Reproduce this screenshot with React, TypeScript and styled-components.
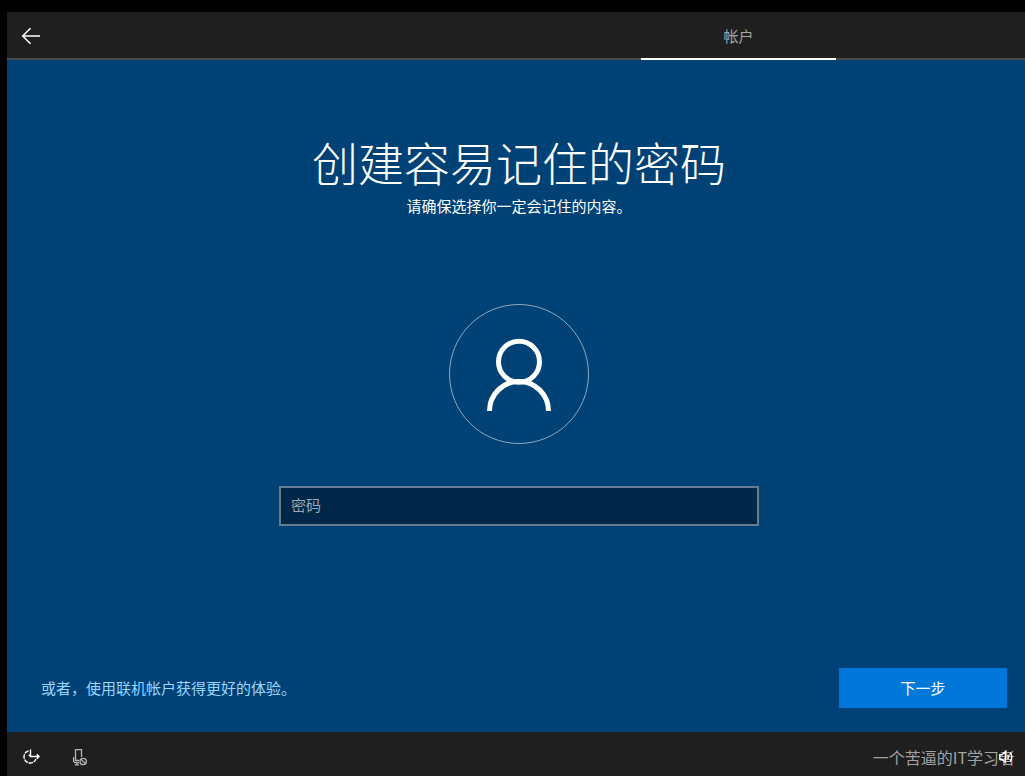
import React from "react";
import styled, { createGlobalStyle } from "styled-components";

const GlobalStyle = createGlobalStyle`
  * { box-sizing: border-box; }
  html, body { margin: 0; background: #000; }
  body, button, input {
    font-family: "Noto Sans CJK SC", "Noto Sans", sans-serif;
    font-size: 15px;
    line-height: 20px;
  }
`;

const Screen = styled.div`
  min-height: 100vh;
  padding: 12px 0 0 7px;
  overflow: hidden;
  display: flex;
  flex-direction: column;
`;

/* The setup window runs slightly past the right edge of the screen. */
const Frame = styled.div`
  flex: 1;
  margin-right: -6px;
  display: flex;
  flex-direction: column;
  background: #004275;
  color: #fff;
`;

const Header = styled.header`
  height: 48px;
  display: flex;
  justify-content: space-between;
  background: #1f1f1f;
  box-shadow: inset 0 -2px #4c4c4c;
`;

const IconButton = styled.button<{ $color?: string }>`
  width: 48px;
  height: 48px;
  padding: 0;
  border: 0;
  display: flex;
  align-items: center;
  justify-content: center;
  background: transparent;
  color: ${(p) => p.$color ?? "#fff"};

  svg { display: block; }
`;

const Tabs = styled.nav`
  display: flex;
  padding-right: 195px;
`;

const Tab = styled.a`
  width: 195px;
  padding-top: 2px;
  display: flex;
  align-items: center;
  justify-content: center;
  border-bottom: 2px solid #fff;
  color: #a5a5a5;
  text-decoration: none;
`;

const Main = styled.main`
  flex: 1;
  padding: 72px 24px 24px;
  display: flex;
  flex-direction: column;
  align-items: center;
`;

const Title = styled.h1`
  margin: 0 0 6px;
  font-size: 46px;
  line-height: 58px;
  font-weight: 300;
  text-align: center;
`;

const Subtitle = styled.p`
  margin: 0;
  text-align: center;
`;

const Avatar = styled.div`
  width: 140px;
  height: 140px;
  margin: 88px 0 42px;
  flex: none;

  svg { display: block; }
`;

const PasswordInput = styled.input`
  width: 480px;
  max-width: 100%;
  height: 40px;
  padding: 0 10px 4px;
  border: 2px solid #667c91;
  border-radius: 0;
  outline: 0;
  background: #002747;
  color: #fff;

  &::placeholder { color: #99a9b5; opacity: 1; }
`;

const Actions = styled.div`
  align-self: stretch;
  margin-top: auto;
  padding-left: 10px;
  display: flex;
  align-items: center;
  justify-content: space-between;
`;

const OnlineLink = styled.a`
  color: #99d6ff;
  text-decoration: none;
`;

const NextButton = styled.button`
  width: 168px;
  height: 40px;
  border: 0;
  background: #0078d9;
  color: #fff;
`;

const Footer = styled.footer`
  position: relative;
  height: 44px;
  padding-top: 1px;
  display: flex;
  align-items: flex-start;
  background: #1f1f1f;
`;

const VolumeButton = styled(IconButton)`
  position: relative;
  z-index: 1;
  margin-left: auto;
`;

const Watermark = styled.span`
  position: absolute;
  right: 16px;
  top: 13px;
  font-size: 16px;
  line-height: 24px;
  color: #a3a3a3;
  pointer-events: none;
`;

const BackIcon = () => (
  <svg width="20" height="18" viewBox="0 0 20 18" fill="none" stroke="currentColor" strokeWidth="1.5">
    <path d="M19 9H2M9.5 1.2L1.7 9l7.8 7.8" />
  </svg>
);

const UserIcon = () => (
  <svg width="140" height="140" viewBox="0 0 140 140" fill="none" stroke="#fff">
    <circle cx="70" cy="70" r="69.5" stroke="#8ca9c0" strokeWidth="1" />
    <circle cx="70" cy="57.7" r="20.5" strokeWidth="5" />
    <path d="M40.500 107a29.500 29.500 0 0 1 59 0" strokeWidth="5" />
  </svg>
);

const EaseIcon = () => (
  <svg width="18" height="18" viewBox="0 0 18 18" fill="none" stroke="currentColor" strokeWidth="1.4">
    <path d="M6.500 2.800A6.200 6.200 0 1 0 14 11" strokeDasharray="4.500 0.800" />
    <path d="M8.500 1.500v7H17M6.800 6.800l1.700 1.700M14.800 6.300L17 8.500l-2.200 2.200" />
  </svg>
);

const MicOffIcon = () => (
  <svg width="16" height="18" viewBox="0 0 16 18" fill="none" stroke="currentColor" strokeWidth="1.3">
    <path d="M8 12.500H4.500V1.600h6V9M2.600 9v4.500l1.200 1.200H8M6 14.700v2.200M3.800 16.900H8" />
    <circle cx="12.200" cy="13.500" r="3.200" />
    <path d="M10 11.300l4.400 4.400" />
  </svg>
);

const VolumeIcon = () => (
  <svg width="16" height="16" viewBox="0 0 16 16" fill="none" stroke="currentColor" strokeWidth="1.4">
    <path d="M0.800 5.800h2.200L6.500 2.500v11L3 10.200H0.800zM8.500 5.800a3 3 0 0 1 0 4.400M11 3.500a6.500 6.500 0 0 1 0 9" />
  </svg>
);

export default function App() {
  return (
    <>
      <GlobalStyle />
      <Screen>
        <Frame>
          <Header>
            <IconButton type="button" aria-label="返回"><BackIcon /></IconButton>
            <Tabs>
              <Tab href="#account" aria-current="step">帐户</Tab>
            </Tabs>
          </Header>
          <Main>
            <Title>创建容易记住的密码</Title>
            <Subtitle>请确保选择你一定会记住的内容。</Subtitle>
            <Avatar><UserIcon /></Avatar>
            <PasswordInput type="password" placeholder="密码" aria-label="密码" />
            <Actions>
              <OnlineLink href="#online">或者，使用联机帐户获得更好的体验。</OnlineLink>
              <NextButton type="button">下一步</NextButton>
            </Actions>
          </Main>
          <Footer>
            <IconButton type="button" aria-label="轻松使用"><EaseIcon /></IconButton>
            <IconButton type="button" aria-label="麦克风" $color="#b5b5b5"><MicOffIcon /></IconButton>
            <VolumeButton type="button" aria-label="音量"><VolumeIcon /></VolumeButton>
            <Watermark>一个苦逼的IT学习者</Watermark>
          </Footer>
        </Frame>
      </Screen>
    </>
  );
}
